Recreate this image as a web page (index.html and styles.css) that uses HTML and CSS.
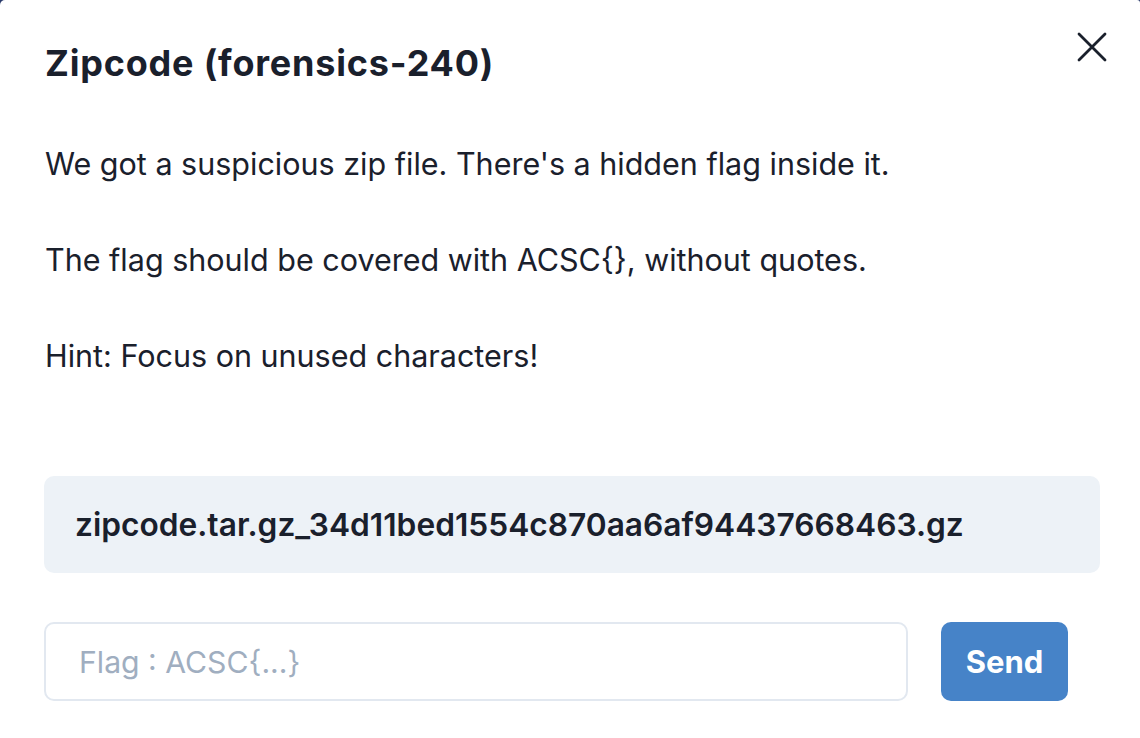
FILE: index.html
```html
<!DOCTYPE html>
<html>
<head>
<meta charset="utf-8">
<link rel="stylesheet" href="styles.css">
</head>
<body>
<div class="modal">
  <header class="modal-header">
    <h2 class="title">Zipcode (forensics-240)</h2>
    <button class="close" aria-label="Close">
      <svg width="30" height="30" viewBox="0 0 30 30"><path d="M2 2 L28 28 M28 2 L2 28" stroke="#1a202c" stroke-width="2.8" stroke-linecap="round"/></svg>
    </button>
  </header>
  <div class="modal-body">
    <p>We got a suspicious zip file. There's a hidden flag inside it.</p>
    <p>The flag should be covered with ACSC{}, without quotes.</p>
    <p>Hint: Focus on unused characters!</p>
    <div class="file">zipcode.tar.gz_34d11bed1554c870aa6af94437668463.gz</div>
    <form class="flag-form">
      <input class="flag-input" type="text" placeholder="Flag : ACSC{...}">
      <button class="send" type="button">Send</button>
    </form>
  </div>
</div>
</body>
</html>
```
FILE: styles.css
```css
html, body {
  margin: 0;
  padding: 0;
  background: #2a3a6b;
}
body {
  font-family: Inter, "Noto Sans", sans-serif;
  color: #1a202c;
}
.modal {
  width: 1140px;
  height: 738px;
  background: #ffffff;
  border-top-left-radius: 5px;
  border-top-right-radius: 3px;
  box-sizing: border-box;
  padding: 0 40px 0 44px;
}
.modal-header {
  display: flex;
  justify-content: space-between;
  align-items: flex-start;
  padding-top: 38px;
}
.title {
  margin: 0;
  font-size: 36px;
  font-weight: 700;
  letter-spacing: 0.8px;
  line-height: 50px;
  padding-left: 1px;
}
.close {
  border: 0;
  background: none;
  padding: 0;
  margin-top: -6px;
  margin-right: -7px;
  width: 30px;
  height: 30px;
}
.close svg { display: block; }
.modal-body {
  padding-top: 56px;
}
.modal-body p {
  margin: 0 0 56px 1px;
  font-size: 30.5px;
  line-height: 40px;
}
.file {
  margin-top: 100px;
  background: #edf2f7;
  border-radius: 10px;
  height: 97px;
  display: flex;
  align-items: center;
  padding-left: 31px;
  font-size: 31.7px;
  font-weight: 600;
}
.flag-form {
  display: flex;
  gap: 33px;
  margin-top: 49px;
}
.flag-input {
  width: 864px;
  height: 79px;
  box-sizing: border-box;
  border: 2px solid #e2e8f0;
  border-radius: 10px;
  padding: 0 33px;
  font-family: inherit;
  font-size: 30.2px;
  color: #1a202c;
  outline: none;
}
.flag-input::placeholder { color: #a0aec0; }
.send {
  width: 127px;
  height: 79px;
  border: 0;
  border-radius: 10px;
  background: #4683c8;
  color: #ffffff;
  font-family: inherit;
  font-size: 31px;
  font-weight: 700;
}
```
